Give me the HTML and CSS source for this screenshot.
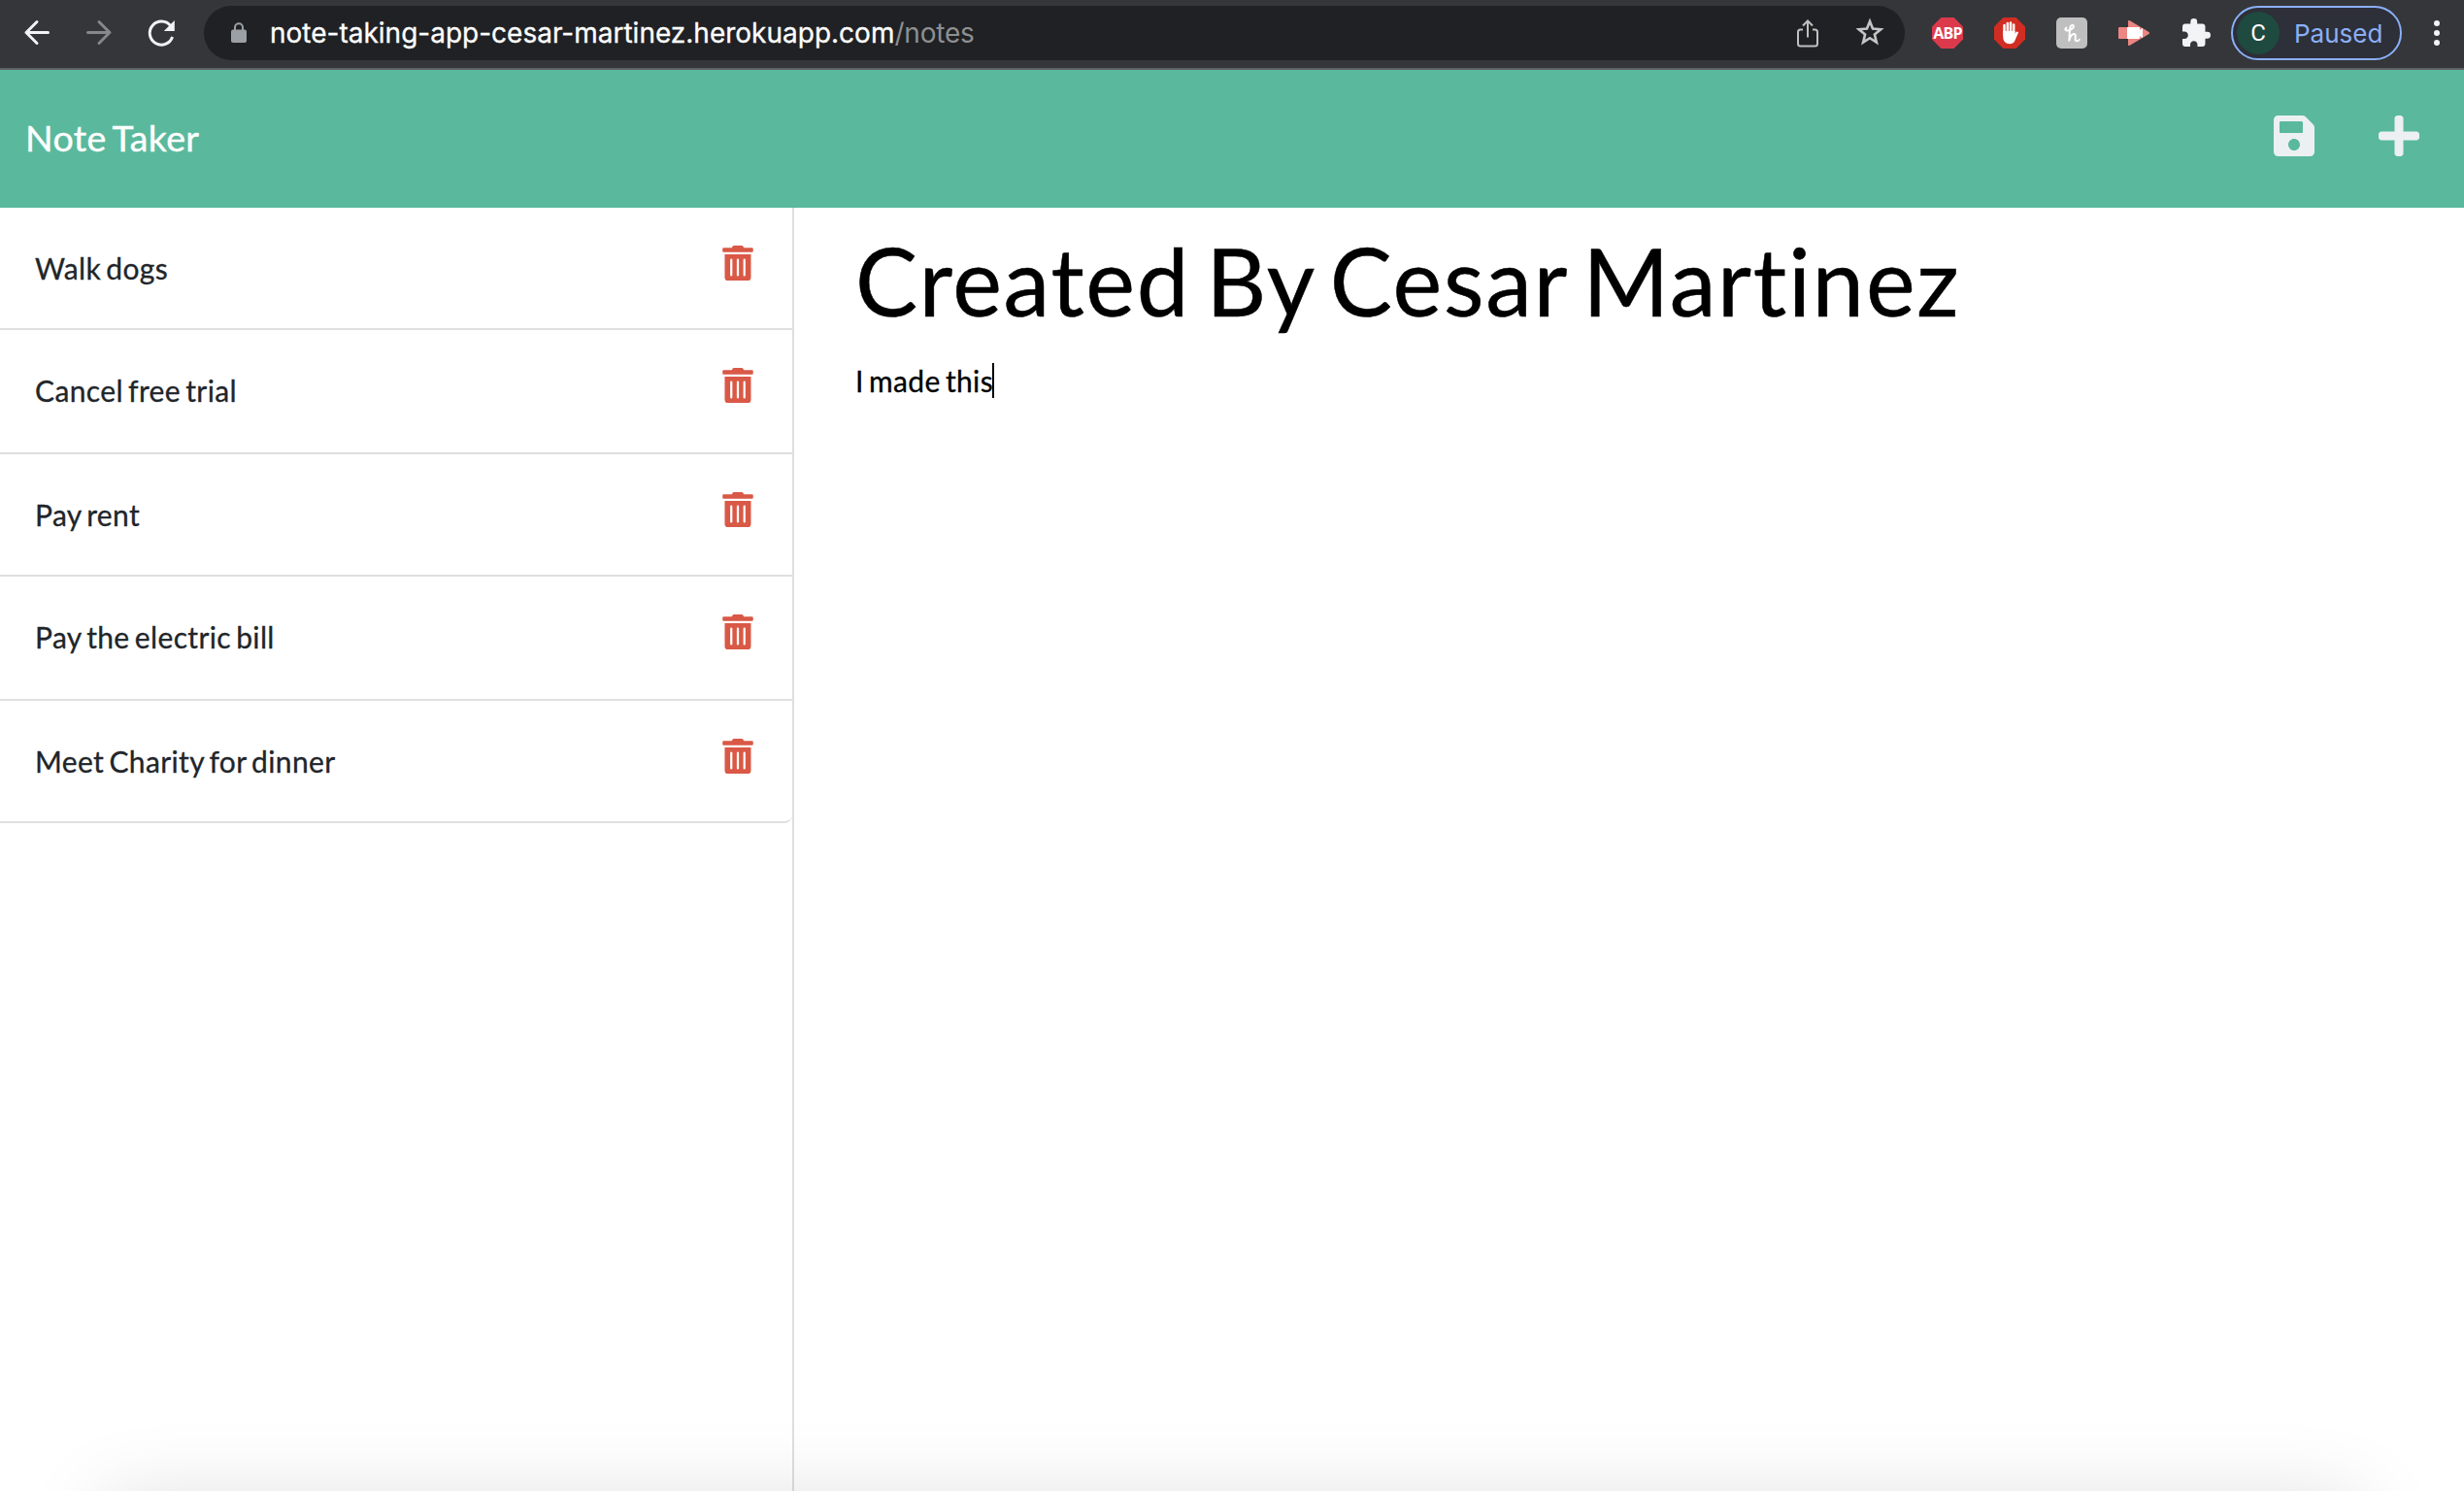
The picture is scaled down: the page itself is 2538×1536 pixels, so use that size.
FILE: index.html
```html
<!DOCTYPE html>
<html lang="en">
<head>
<meta charset="utf-8">
<title>Note Taker</title>
<link rel="stylesheet" href="styles.css">
</head>
<body>
<svg class="defs" aria-hidden="true">
  <symbol id="trash" viewBox="0 0 448 512"><path d="M32 464a48 48 0 0 0 48 48h288a48 48 0 0 0 48-48V128H32zm272-256a16 16 0 0 1 32 0v224a16 16 0 0 1-32 0zm-96 0a16 16 0 0 1 32 0v224a16 16 0 0 1-32 0zm-96 0a16 16 0 0 1 32 0v224a16 16 0 0 1-32 0zM432 32H312l-9.4-18.7A24 24 0 0 0 281.1 0H166.8a23.72 23.72 0 0 0-21.4 13.3L136 32H16A16 16 0 0 0 0 48v32a16 16 0 0 0 16 16h416a16 16 0 0 0 16-16V48a16 16 0 0 0-16-16z"/></symbol>
</svg>
<div class="toolbar">
  <div class="nav-buttons">
    <svg width="32" height="32" viewBox="0 0 32 32" fill="none" stroke="#f1f3f4" stroke-width="3" stroke-linecap="round" stroke-linejoin="round"><path d="M27.5 15.5H5M16 4.500 5 15.500 16 26.500"/></svg>
    <svg width="32" height="32" viewBox="0 0 32 32" fill="none" stroke="#87888b" stroke-width="3" stroke-linecap="round" stroke-linejoin="round"><path d="M4.500 15.500H27M16 4.500 27 15.500 16 26.500"/></svg>
    <svg width="32" height="32" viewBox="0 0 32 32" fill="none"><path d="M25.700 8.700A12 12 0 1 0 27.600 20" stroke="#f1f3f4" stroke-width="3"/><path d="M29.800 3v11H18.800z" fill="#f1f3f4"/></svg>
  </div>
  <div class="omnibox">
    <svg class="lock" width="16" height="22" viewBox="0 0 16 22"><rect y="7.500" width="16" height="13.500" rx="2" fill="#9aa0a6"/><path d="M4 8V5.200a4 4 0 0 1 8 0V8" fill="none" stroke="#9aa0a6" stroke-width="2"/></svg>
    <div class="url"><span class="host">note-taking-app-cesar-martinez.herokuapp.com</span><span class="path">/notes</span></div>
    <svg class="share" width="24" height="32" viewBox="0 0 24 32" fill="none" stroke="#bfc0bf" stroke-width="2"><path d="M7 12.500H4.500A2.500 2.500 0 0 0 2 15v12a2.500 2.500 0 0 0 2.500 2.500h15A2.500 2.500 0 0 0 22 27V15a2.500 2.500 0 0 0-2.500-2.500H17M12 20.500V4M7 8.500l5-5 5 5"/></svg>
    <svg class="star" width="30" height="30" viewBox="0 0 30 30" fill="none" stroke="#c4c5c5" stroke-width="2.600"><path d="m15 4 3 7.600 8.300.600-6.400 5.300 2 8.100L15 21.200l-6.900 4.400 2-8.100-6.400-5.300 8.300-.600z"/></svg>
  </div>
  <div class="extensions">
    <div class="abp">ABP</div>
    <svg width="32" height="32" viewBox="0 0 32 32"><path d="M9.400 0h13.200L32 9.400v13.200L22.600 32H9.400L0 22.600V9.400z" fill="#d12d22"/><g stroke="#fff" stroke-width="2.500" stroke-linecap="round" fill="none"><path d="M10.500 8v10M13.800 6v10M17 5.500V16M20.200 7.500V17M23.700 15.700 20.500 21"/></g><path d="M9.250 14h12.200v3.500l1.800-1.300 1 .8-2.700 6.500c-1 2.500-2.800 3.700-5.300 3.700-4.500 0-7-3-7-7z" fill="#fff"/></svg>
    <svg width="32" height="32" viewBox="0 0 32 32"><rect width="32" height="32" rx="5" fill="#bfbfbf"/><path d="M10.500 10.500C8 12.500 10 14 13 13.200c3-.8 5.200-2.700 4.800-4.400-.4-1.500-2.600-1.200-3.200.8-.9 3-.9 9-1.300 14.200 1-4 3.200-7 5.200-6.800 2.600.3.400 4.800 1.300 6.500.7 1.300 3 1 4-.7" fill="none" stroke="#fff" stroke-width="2" stroke-linecap="round" stroke-linejoin="round"/></svg>
    <svg width="32" height="32" viewBox="0 0 32 32"><path d="M1 10h9v12H1a1 1 0 0 1-1-1V11a1 1 0 0 1 1-1zM10 4.300c0-1.200.8-1.600 1.800-1L31.500 15q1 1 0 2L11.800 28.700c-1 .6-1.800.2-1.800-1z" fill="#ec8682"/><path d="M9 10h12q1 0 1 1v2l3-2.200V21.200L22 19v2q0 1-1 1H9z" fill="#fff"/></svg>
    <svg class="puzzle" width="29" height="29" viewBox="2 1 21 21" fill="#f1f3f4"><path d="M20.500 11H19V7c0-1.100-.9-2-2-2h-4V3.500a2.500 2.500 0 0 0-5 0V5H4c-1.100 0-1.990.9-1.990 2v3.800H3.500c1.490 0 2.700 1.210 2.700 2.700s-1.210 2.700-2.700 2.700H2V20c0 1.100.9 2 2 2h3.800v-1.500c0-1.490 1.210-2.700 2.700-2.700s2.700 1.210 2.700 2.700V22H17c1.100 0 2-.9 2-2v-4h1.500a2.500 2.500 0 0 0 0-5z"/></svg>
  </div>
  <div class="profile"><span class="avatar">C</span><span class="status">Paused</span></div>
  <svg class="menu" width="6" height="26" viewBox="0 0 6 26" fill="#f1f3f4"><circle cx="3" cy="3" r="3"/><circle cx="3" cy="13" r="3"/><circle cx="3" cy="23" r="3"/></svg>
</div>
<header class="navbar">
  <span class="brand">Note Taker</span>
  <div class="actions">
    <svg width="42" height="42" viewBox="0 32 448 448"><path d="M433.941 129.941l-83.882-83.882A48 48 0 0 0 316.118 32H48C21.490 32 0 53.490 0 80v352c0 26.510 21.490 48 48 48h352c26.510 0 48-21.490 48-48V163.882a48 48 0 0 0-14.059-33.941zM224 416c-35.346 0-64-28.654-64-64 0-35.346 28.654-64 64-64s64 28.654 64 64c0 35.346-28.654 64-64 64zm96-304.520V212c0 6.627-5.373 12-12 12H76c-6.627 0-12-5.373-12-12V108c0-6.627 5.373-12 12-12h228.520c3.183 0 6.235 1.264 8.485 3.515l3.480 3.480A11.996 11.996 0 0 1 320 111.480z"/></svg>
    <svg width="42" height="42" viewBox="0 32 448 448"><path d="M416 208H272V64c0-17.670-14.330-32-32-32h-32c-17.670 0-32 14.330-32 32v144H32c-17.670 0-32 14.330-32 32v32c0 17.670 14.330 32 32 32h144v144c0 17.670 14.330 32 32 32h32c17.670 0 32-14.330 32-32V304h144c17.670 0 32-14.330 32-32v-32c0-17.670-14.330-32-32-32z"/></svg>
  </div>
</header>
<main class="content">
  <ul class="notes">
    <li><span>Walk dogs</span><svg><use href="#trash"/></svg></li>
    <li><span>Cancel free trial</span><svg><use href="#trash"/></svg></li>
    <li><span>Pay rent</span><svg><use href="#trash"/></svg></li>
    <li><span>Pay the electric bill</span><svg><use href="#trash"/></svg></li>
    <li><span>Meet Charity for dinner</span><svg><use href="#trash"/></svg></li>
  </ul>
  <section class="editor">
    <h1>Created By Cesar Martinez</h1>
    <p><span>I made this</span><i class="caret"></i></p>
  </section>
</main>
<div class="edge-shadow"></div>
</body>
</html>
```

FILE: styles.css
```css
* { box-sizing: border-box; }
body {
  margin: 0;
  height: 1536px;
  position: relative;
  display: flex;
  flex-direction: column;
  background: #fff;
  font-family: Lato, sans-serif;
  font-size: 30px;
  line-height: 45px;
  letter-spacing: .36px;
  word-spacing: -2.8px;
  font-variant-ligatures: none;
  color: #212529;
}
svg { display: block; flex: none; }
.defs { display: none; }

.toolbar {
  height: 72px;
  flex: none;
  display: flex;
  align-items: flex-start;
  padding: 6px 25px 0 22px;
  background: #35363a;
  border-bottom: 2px solid #5f6063;
  font-family: Inter, sans-serif;
  letter-spacing: 0;
}
.nav-buttons { display: flex; gap: 32px; padding-top: 12px; width: 188px; }
.omnibox {
  width: 1752px;
  height: 56px;
  border-radius: 28px;
  background: #202124;
  display: flex;
  align-items: center;
  padding: 0 21px 0 28px;
}
.lock { margin-bottom: 1px; }
.url {
  margin-left: 24px;
  flex: 1;
  font-size: 28px;
  white-space: nowrap;
  letter-spacing: 0;
  padding-top: 1px;
}
.host { color: #fff; -webkit-text-stroke: .3px #fff; }
.path { color: #8e8f91; letter-spacing: -.2px; }
.share { margin-right: 37px; }
.star { margin-bottom: 2px; }
.extensions {
  display: flex;
  gap: 32px;
  padding: 12px 0 0 28px;
  width: 336px;
}
.puzzle { margin: 1px 0 0 2px; }
.abp {
  width: 32px;
  height: 32px;
  background: #dc3a4c;
  clip-path: polygon(29.4% 0, 70.6% 0, 100% 29.4%, 100% 70.6%, 70.6% 100%, 29.4% 100%, 0 70.6%, 0 29.4%);
  font: 700 16px/32px "Open Sans", sans-serif;
  letter-spacing: -.8px;
  color: #fff;
  text-align: center;
}
.profile {
  width: 176px;
  height: 56px;
  border: 2px solid #8ab0f6;
  border-radius: 28px;
  background: #2d2f39;
  display: flex;
  align-items: center;
  padding-left: 4px;
}
.avatar {
  width: 44px;
  height: 44px;
  border-radius: 50%;
  background: #1f4a3f;
  color: #fff;
  font: 24px/44px Roboto, sans-serif;
  text-align: center;
}
.status { margin-left: 15px; padding-top: 1px; font-size: 26px; color: #8ab0f6; }
.menu { margin: 15px 0 0 33px; }

.navbar {
  height: 142px;
  flex: none;
  display: flex;
  justify-content: space-between;
  padding: 0 46px 0 26px;
  background: #5ab99d;
}
.brand {
  font-size: 37.5px;
  line-height: 56px;
  color: #fff;
  margin-top: 42px;
  -webkit-text-stroke: .4px #fff;
}
.actions { display: flex; gap: 66px; padding-top: 47px; fill: #ecf0f1; }

.content { flex: 1; display: flex; }
.notes { width: 816px; margin: 0; padding: 0; list-style: none; }
.notes li {
  height: 126px;
  display: flex;
  justify-content: space-between;
  align-items: flex-start;
  padding: 39px 40px 0 36px;
  border-bottom: 2px solid #dfdfdf;
}
.notes li:nth-child(even) { height: 128px; }
.notes li:last-child { border-bottom-right-radius: 8px; }
.notes span { padding-top: 1px; -webkit-text-stroke: .3px #212529; }
.notes svg { width: 32px; height: 36px; fill: #d95846; }
.editor {
  flex: 1;
  border-left: 2px solid #dfdfdf;
  padding: 3px 0 0 63px;
  color: #000;
}
.editor h1 {
  margin: 0;
  font-size: 96px;
  line-height: 144px;
  font-weight: 400;
  letter-spacing: 1.7px;
  word-spacing: -10.2px;
  -webkit-text-stroke: .5px #000;
}
.editor p { margin: 9px 0 0; display: flex; -webkit-text-stroke: .3px #000; }
.caret { width: 2px; height: 36px; background: #000; margin: 4px 0 0 -1px; }

.edge-shadow {
  position: absolute;
  left: 0;
  right: 0;
  bottom: 0;
  height: 100px;
  overflow: hidden;
  pointer-events: none;
}
.edge-shadow::after {
  content: "";
  display: block;
  height: 100px;
  margin: 108px 106px 0;
  box-shadow: 0 0 84px rgba(0, 0, 0, .13);
}
```
